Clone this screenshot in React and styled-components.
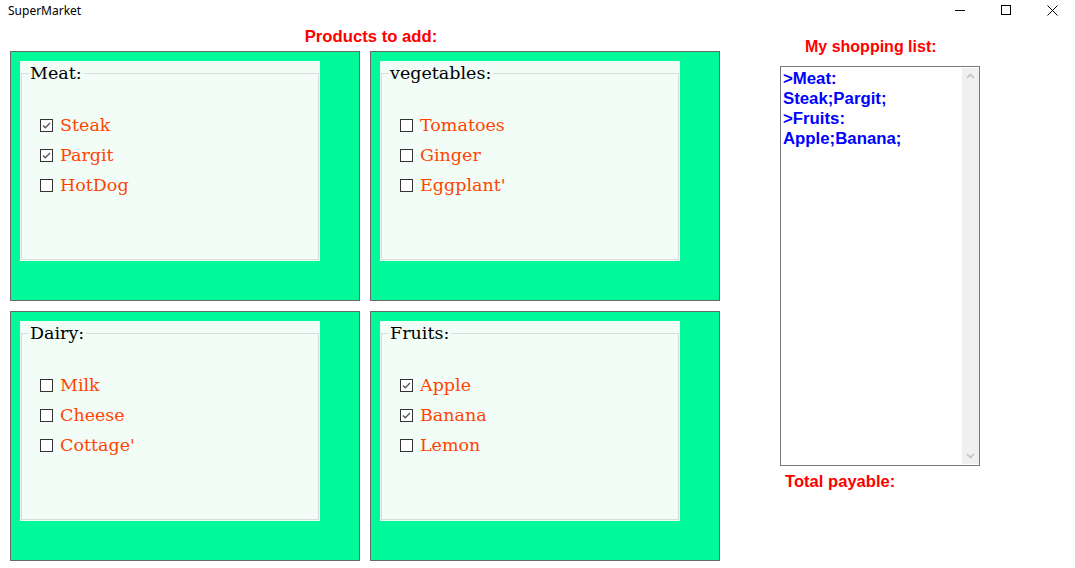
import React from 'react'
import styled, { createGlobalStyle } from 'styled-components'

const GlobalStyle = createGlobalStyle`
  body {
    margin: 0;
    background: #ffffff;
    font-family: "Liberation Sans", Arial, sans-serif;
  }
`

const categories = [
  { title: 'Meat:', items: [['Steak', true], ['Pargit', true], ['HotDog', false]] },
  { title: 'vegetables:', items: [['Tomatoes', false], ['Ginger', false], ["Eggplant'", false]] },
  { title: 'Dairy:', items: [['Milk', false], ['Cheese', false], ["Cottage'", false]] },
  { title: 'Fruits:', items: [['Apple', true], ['Banana', true], ['Lemon', false]] },
]

const shoppingLines = ['>Meat:', 'Steak;Pargit;', '>Fruits:', 'Apple;Banana;']

const Window = styled.div`
  width: 1075px;
  height: 568px;
  overflow: hidden;
`

const TitleBar = styled.div`
  height: 20px;
  display: flex;
  align-items: center;
  justify-content: space-between;
`

const Title = styled.div`
  padding-left: 8px;
  font-family: "Noto Sans", "Open Sans", sans-serif;
  font-size: 12px;
  color: #000;
`

const Controls = styled.div`
  display: flex;
  height: 20px;
`

const ControlButton = styled.div`
  width: 46px;
  display: flex;
  align-items: center;
  justify-content: center;
`

const Main = styled.div`
  display: flex;
  padding: 7px 0 0 10px;
  gap: 60px;
`

const LeftCol = styled.div`
  width: 710px;
`

const Heading = styled.div`
  font-weight: bold;
  font-size: ${p => p.$size || 16}px;
  line-height: 20px;
  color: #ff0000;
  text-align: ${p => p.$align || 'left'};
  padding-left: ${p => p.$indent || 0}px;
`

const ProductsHeading = styled(Heading)`
  margin-bottom: 4px;
`

const Grid = styled.div`
  display: grid;
  grid-template-columns: 350px 350px;
  grid-auto-rows: 250px;
  gap: 10px;
`

const Panel = styled.div`
  box-sizing: border-box;
  background: #00fa9a;
  border: 1px solid #696969;
  padding: 9px;
`

const GroupBox = styled.div`
  width: 300px;
  height: 200px;
  background: #f2fdf8;
`

const Fieldset = styled.fieldset`
  box-sizing: border-box;
  margin: 0 1px 1px 1px;
  height: 199px;
  border: 1px solid #d8dcda;
  padding: 25px 0 0 18px;
  min-width: 0;
`

const Legend = styled.legend`
  margin-left: -11px;
  padding: 0 2px 0 1px;
  font-family: "DejaVu Serif", Georgia, serif;
  font-size: 17.5px;
  line-height: 24px;
  color: #000;
`

const Row = styled.label`
  display: flex;
  align-items: center;
  gap: 7px;
  height: 30px;
  font-family: "DejaVu Serif", Georgia, serif;
  font-size: 17.5px;
  color: #ff4500;
`

const Box = styled.span`
  box-sizing: border-box;
  width: 13px;
  height: 13px;
  border: 1px solid #333333;
  background: #ffffff;
  display: flex;
  align-items: center;
  justify-content: center;
`

const RightCol = styled.div`
  padding-top: 10px;
`

const ListBox = styled.div`
  box-sizing: border-box;
  width: 200px;
  height: 400px;
  margin-top: 9px;
  border: 1px solid #7a7a7a;
  display: flex;
`

const ListText = styled.div`
  flex: 1;
  padding: 2px 0 0 2px;
  font-weight: bold;
  font-size: 16.8px;
  line-height: 20px;
  color: #0000ff;
`

const ScrollBar = styled.div`
  width: 17px;
  margin: 1px 0;
  background: #f0f0f0;
  display: flex;
  flex-direction: column;
  justify-content: space-between;
  align-items: center;
  padding: 5px 0;
`

const TotalHeading = styled(Heading)`
  margin-top: 6px;
`

const Chevron = ({ up }) => (
  <svg width="9" height="6" viewBox="0 0 9 6">
    <path
      d={up ? 'M1 5 L4.5 1.5 L8 5' : 'M1 1 L4.5 4.5 L8 1'}
      fill="none"
      stroke="#c2c2c2"
      strokeWidth="1.6"
    />
  </svg>
)

const Check = () => (
  <svg width="11" height="11" viewBox="0 0 11 11">
    <path d="M2 5.5 L4.3 7.8 L9 3" fill="none" stroke="#555" strokeWidth="1.3" />
  </svg>
)

const App = () => (
  <Window>
    <GlobalStyle />
    <TitleBar>
      <Title>SuperMarket</Title>
      <Controls>
        <ControlButton>
          <svg width="10" height="10" viewBox="0 0 10 10">
            <path d="M0 5.5 H10" stroke="#000" strokeWidth="1" />
          </svg>
        </ControlButton>
        <ControlButton>
          <svg width="10" height="10" viewBox="0 0 10 10">
            <rect x="0.5" y="0.5" width="9" height="9" fill="none" stroke="#000" strokeWidth="1" />
          </svg>
        </ControlButton>
        <ControlButton>
          <svg width="11" height="11" viewBox="0 0 11 11">
            <path d="M0.5 0.5 L10.5 10.5 M10.5 0.5 L0.5 10.5" stroke="#000" strokeWidth="1" />
          </svg>
        </ControlButton>
      </Controls>
    </TitleBar>
    <Main>
      <LeftCol>
        <ProductsHeading $align="center" $size={16.7} $indent={12}>
          Products to add:
        </ProductsHeading>
        <Grid>
          {categories.map(cat => (
            <Panel key={cat.title}>
              <GroupBox>
                <Fieldset>
                  <Legend>{cat.title}</Legend>
                  {cat.items.map(([name, checked]) => (
                    <Row key={name}>
                      <Box>{checked ? <Check /> : null}</Box>
                      {name}
                    </Row>
                  ))}
                </Fieldset>
              </GroupBox>
            </Panel>
          ))}
        </Grid>
      </LeftCol>
      <RightCol>
        <Heading $indent={25}>My shopping list:</Heading>
        <ListBox>
          <ListText>
            {shoppingLines.map(line => (
              <div key={line}>{line}</div>
            ))}
          </ListText>
          <ScrollBar>
            <Chevron up />
            <Chevron />
          </ScrollBar>
        </ListBox>
        <TotalHeading $indent={5} $size={16.6}>Total payable:</TotalHeading>
      </RightCol>
    </Main>
  </Window>
)

export default App
